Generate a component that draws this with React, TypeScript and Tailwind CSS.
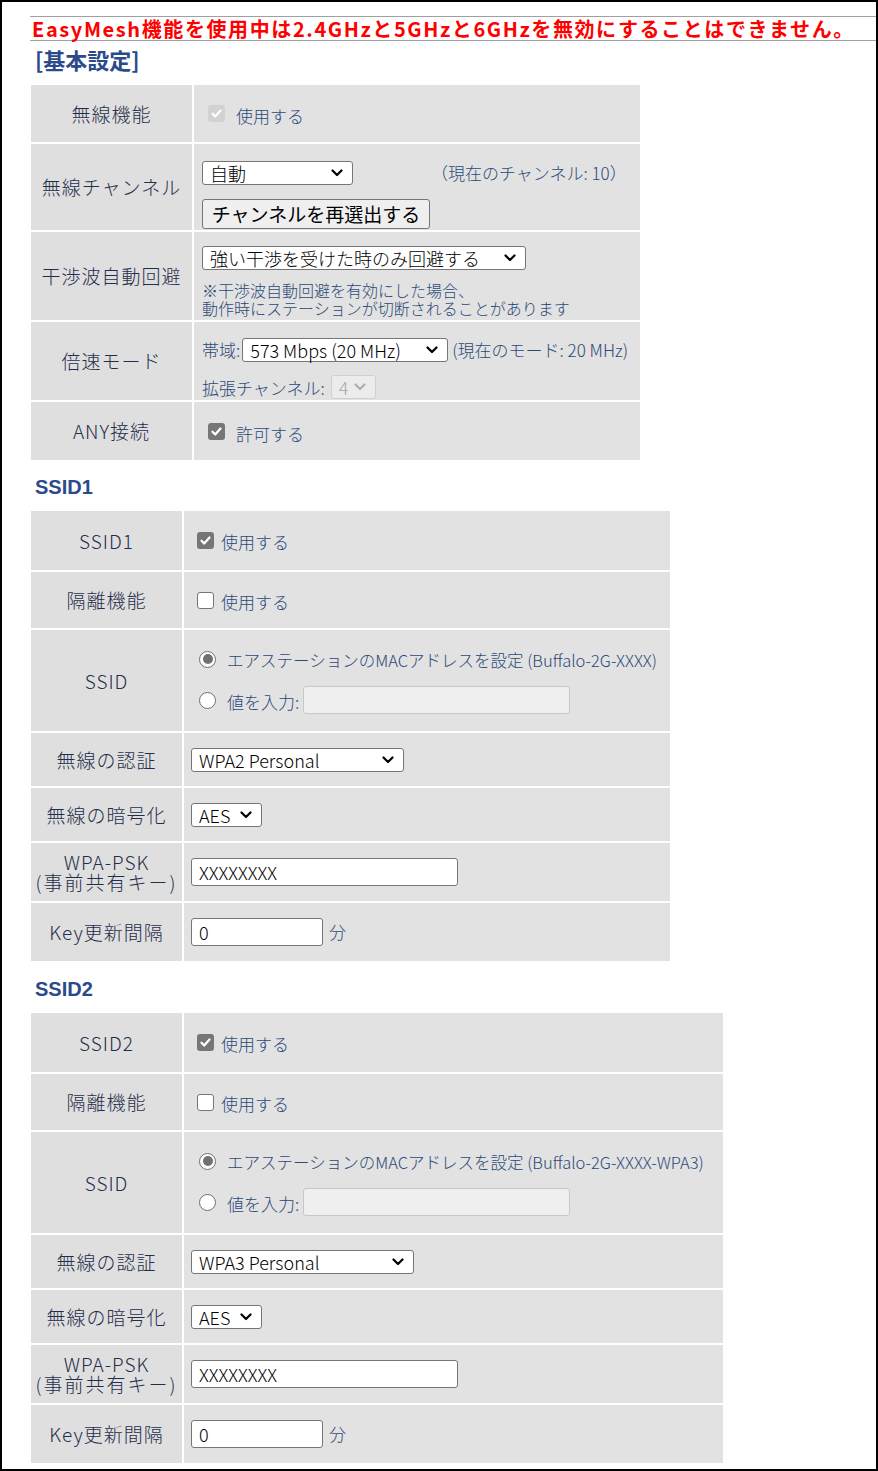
import type { ReactNode } from 'react';

const VALUE = 'text-[#2c4a78]';

function Chevron({ muted }: { muted?: boolean }) {
  return (
    <svg width="12" height="8" viewBox="0 0 12 8" className="shrink-0">
      <polyline
        points="1.5,1.5 6,6 10.5,1.5"
        fill="none"
        stroke={muted ? '#b0b0b0' : '#000'}
        strokeWidth="2.2"
        strokeLinecap="round"
        strokeLinejoin="round"
      />
    </svg>
  );
}

function Select({ className, children, disabled }: { className: string; children: ReactNode; disabled?: boolean }) {
  return (
    <div
      className={`flex items-center justify-between h-[24px] rounded-[3px] border pl-[7px] pr-[9px] text-[18px] leading-none whitespace-nowrap ${
        disabled ? 'border-[#d0d0d0] bg-[#ececec] text-[#a8a8a8]' : 'border-[#767676] bg-white text-black'
      } ${className}`}
    >
      <span>{children}</span>
      <Chevron muted={disabled} />
    </div>
  );
}

function TextInput({ className, value, disabled }: { className: string; value?: string; disabled?: boolean }) {
  return (
    <div
      className={`flex items-center h-[28px] rounded-[3px] border pl-[7px] text-[18px] text-black leading-none ${
        disabled ? 'border-[#c8c8c8] bg-[#efefef]' : 'border-[#767676] bg-white'
      } ${className}`}
    >
      {value}
    </div>
  );
}

function Check({ state }: { state: 'on' | 'off' | 'disabled' }) {
  if (state === 'off') {
    return <div className="w-[17px] h-[17px] rounded-[3px] border border-[#767676] bg-white shrink-0" />;
  }
  return (
    <div
      className={`w-[17px] h-[17px] rounded-[3px] flex items-center justify-center shrink-0 ${
        state === 'on' ? 'bg-[#767676]' : 'bg-[#d2d2d2]'
      }`}
    >
      <svg width="13" height="13" viewBox="0 0 13 13">
        <path d="M2.5 6.8 L5.2 9.5 L10.5 3.5" fill="none" stroke="#fff" strokeWidth="2.3" strokeLinecap="round" strokeLinejoin="round" />
      </svg>
    </div>
  );
}

function Radio({ on }: { on?: boolean }) {
  return (
    <div className="w-[17px] h-[17px] rounded-full border border-[#6f6f6f] bg-white flex items-center justify-center shrink-0">
      {on && <div className="w-[10px] h-[10px] rounded-full bg-[#707070]" />}
    </div>
  );
}

function Row({ label, labelW, h, children }: { label: ReactNode; labelW: string; h: string; children: ReactNode }) {
  return (
    <div className={`flex gap-[2px] ${h}`}>
      <div
        className={`${labelW} shrink-0 bg-[#dfdfdf] flex items-center justify-center text-center text-[19px] font-light tracking-[1px] leading-[20px] text-[#1f2e4b] whitespace-nowrap`}
      >
        {label}
      </div>
      <div className={`flex-1 bg-[#e2e2e2] font-light ${VALUE}`}>{children}</div>
    </div>
  );
}

function SsidTable({ name, width, mac, auth, authW }: { name: string; width: string; mac: string; auth: string; authW: string }) {
  const lw = 'w-[151px]';
  return (
    <div className={`flex flex-col gap-[2px] ml-[1px] ${width}`}>
      <Row label={name} labelW={lw} h="h-[59px]">
        <div className="h-full flex items-center pl-[13px]">
          <Check state="on" />
          <span className="ml-[7px] text-[17px] pt-[3px]">使用する</span>
        </div>
      </Row>
      <Row label="隔離機能" labelW={lw} h="h-[56px]">
        <div className="h-full flex items-center pl-[13px]">
          <Check state="off" />
          <span className="ml-[7px] text-[17px] pt-[3px]">使用する</span>
        </div>
      </Row>
      <Row label="SSID" labelW={lw} h="h-[101px]">
        <div className="h-full flex flex-col justify-center gap-[15px] pl-[15px]">
          <div className="flex items-center h-[24px]">
            <Radio on />
            <span className="ml-[11px] text-[16.5px] pt-[3px] whitespace-nowrap">{mac}</span>
          </div>
          <div className="flex items-center h-[28px]">
            <Radio />
            <span className="ml-[11px] text-[17px] pt-[3px]">値を入力:</span>
            <TextInput className="ml-[4px] w-[267px]" disabled />
          </div>
        </div>
      </Row>
      <Row label="無線の認証" labelW={lw} h="h-[53px]">
        <div className="h-full flex items-center pl-[7px]">
          <Select className={authW}>{auth}</Select>
        </div>
      </Row>
      <Row label="無線の暗号化" labelW={lw} h="h-[53px]">
        <div className="h-full flex items-center pl-[7px]">
          <Select className="w-[71px]">AES</Select>
        </div>
      </Row>
      <Row
        label={
          <div className="flex flex-col">
            <span>WPA-PSK</span>
            <span className="tracking-[2px]">(事前共有キー)</span>
          </div>
        }
        labelW={lw}
        h="h-[58px]"
      >
        <div className="h-full flex items-center pl-[7px]">
          <TextInput className="w-[267px]" value="XXXXXXXX" />
        </div>
      </Row>
      <Row label="Key更新間隔" labelW={lw} h="h-[58px]">
        <div className="h-full flex items-center pl-[7px]">
          <TextInput className="w-[132px]" value="0" />
          <span className="ml-[6px] text-[17px]">分</span>
        </div>
      </Row>
    </div>
  );
}

export default function App() {
  const lw = 'w-[161px]';
  return (
    <div className="w-[878px] h-[1471px] border-2 border-black bg-white font-['Noto_Sans_CJK_JP','Noto_Sans',sans-serif] overflow-hidden">
      <div className="pl-[28px] pt-[14px]">
        {/* warning */}
        <div className="h-[25px] border-y border-[#a0a0a0] flex items-center pl-[2px] text-[20px] font-bold tracking-[1.6px] leading-[23px] text-[#ff0000] whitespace-nowrap">
          EasyMesh機能を使用中は2.4GHzと5GHzと6GHzを無効にすることはできません。
        </div>

        <div className="h-[44px] pt-[5px] pl-[5px] text-[22px] font-bold leading-[26px] text-[#2a4a8a]">[基本設定]</div>

        {/* basic settings */}
        <div className="flex flex-col gap-[2px] ml-[1px] w-[609px]">
          <Row label="無線機能" labelW={lw} h="h-[57px]">
            <div className="h-full flex items-center pl-[14px]">
              <Check state="disabled" />
              <span className="ml-[11px] text-[17px] pt-[5px]">使用する</span>
            </div>
          </Row>
          <Row label="無線チャンネル" labelW={lw} h="h-[86px]">
            <div className="flex flex-col items-start pl-[8px] pt-[16px]">
              <div className="flex items-center">
                <Select className="w-[151px]">自動</Select>
                <span className="ml-[78px] text-[17px] whitespace-nowrap">（現在のチャンネル: 10）</span>
              </div>
              <div className="mt-[13px] h-[30px] w-[228px] rounded-[3px] border border-[#767676] bg-[#efefef] flex items-center justify-center text-[19px] font-normal text-black leading-none">
                チャンネルを再選出する
              </div>
            </div>
          </Row>
          <Row label="干渉波自動回避" labelW={lw} h="h-[88px]">
            <div className="flex flex-col items-start pl-[8px] pt-[14px]">
              <Select className="w-[324px]">強い干渉を受けた時のみ回避する</Select>
              <div className="mt-[11px] text-[16px] leading-[18px] whitespace-nowrap">
                <div>※干渉波自動回避を有効にした場合、</div>
                <div>動作時にステーションが切断されることがあります</div>
              </div>
            </div>
          </Row>
          <Row label="倍速モード" labelW={lw} h="h-[78px]">
            <div className="flex flex-col items-start pl-[8px] pt-[15px]">
              <div className="flex items-center">
                <span className="text-[17px]">帯域:</span>
                <Select className="ml-[2px] w-[206px]">573 Mbps (20 MHz)</Select>
                <span className="ml-[4px] text-[17px] whitespace-nowrap">(現在のモード: 20 MHz)</span>
              </div>
              <div className="flex items-center mt-[12px]">
                <span className="text-[17px]">拡張チャンネル:</span>
                <Select className="ml-[6px] w-[45px]" disabled>
                  4
                </Select>
              </div>
            </div>
          </Row>
          <Row label="ANY接続" labelW={lw} h="h-[58px]">
            <div className="h-full flex items-center pl-[14px]">
              <Check state="on" />
              <span className="ml-[11px] text-[17px] pt-[5px]">許可する</span>
            </div>
          </Row>
        </div>

        <div className="h-[51px] pt-[15px] pl-[5px] text-[20px] font-bold leading-[24px] text-[#2a4a8a] font-['Liberation_Sans',sans-serif]">
          SSID1
        </div>
        <SsidTable name="SSID1" width="w-[639px]" mac="エアステーションのMACアドレスを設定 (Buffalo-2G-XXXX)" auth="WPA2 Personal" authW="w-[213px]" />

        <div className="h-[52px] pt-[16px] pl-[5px] text-[20px] font-bold leading-[24px] text-[#2a4a8a] font-['Liberation_Sans',sans-serif]">
          SSID2
        </div>
        <SsidTable
          name="SSID2"
          width="w-[692px]"
          mac="エアステーションのMACアドレスを設定 (Buffalo-2G-XXXX-WPA3)"
          auth="WPA3 Personal"
          authW="w-[223px]"
        />
      </div>
    </div>
  );
}
